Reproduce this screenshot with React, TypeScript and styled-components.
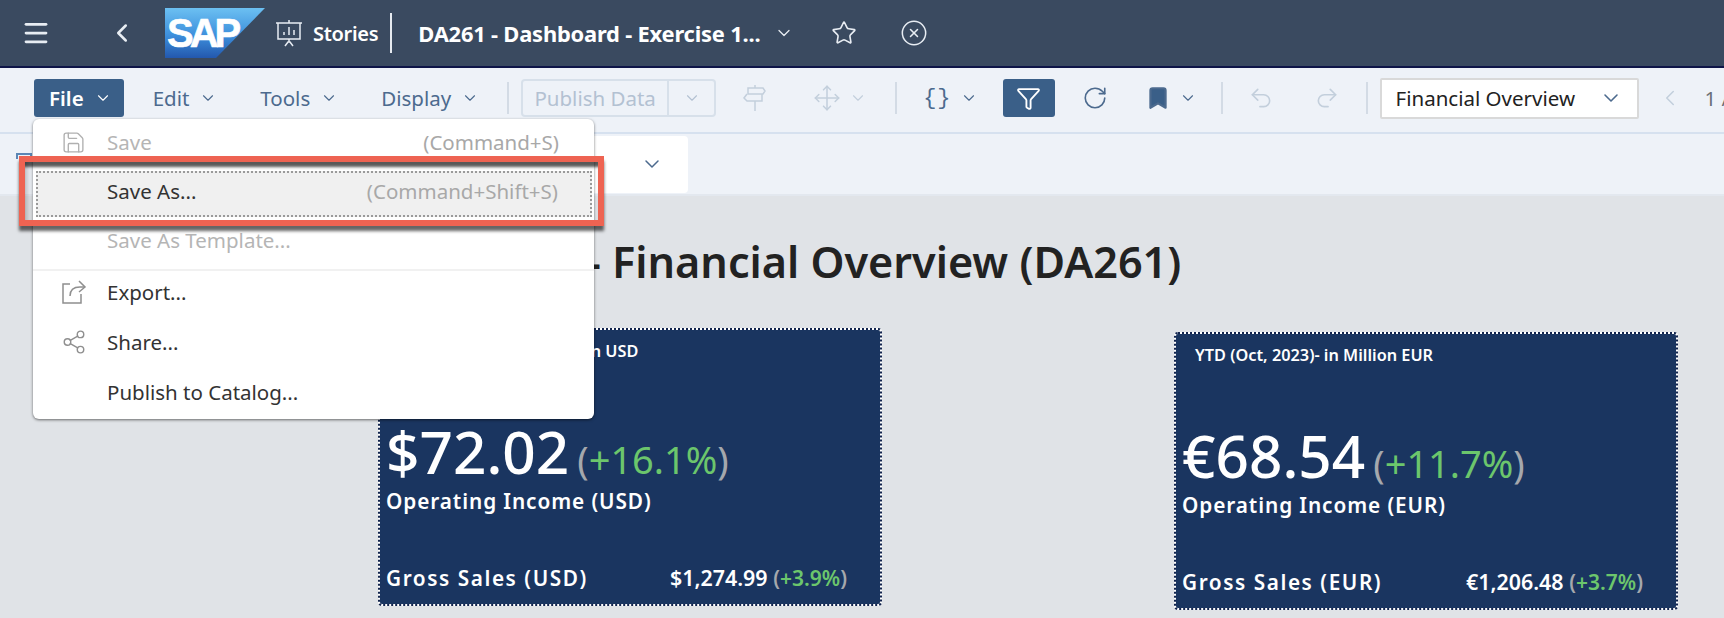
import styled, { createGlobalStyle } from "styled-components";
import {
  Menu,
  ChevronLeft,
  ChevronDown,
  Star,
  CircleX,
  Save,
  Share2,
  Funnel,
  RotateCw,
  Bookmark,
  Undo2,
  Redo2,
  Move,
} from "lucide-react";

const GlobalStyle = createGlobalStyle`
  html, body {
    margin: 0;
    padding: 0;
    background: #e0e3e7;
    font-family: "Noto Sans", "Liberation Sans", sans-serif;
  }
`;

const Page = styled.div`
  position: relative;
  width: 1724px;
  height: 618px;
  overflow: hidden;
  background: #e0e3e7;
`;

const Shell = styled.header`
  display: flex;
  align-items: center;
  box-sizing: border-box;
  height: 68px;
  padding-left: 21px;
  background: #3a4a60;
  border-bottom: 2px solid #0e1548;
  color: #fff;
`;

const ShellIcon = styled.span<{ $ml?: number }>`
  display: flex;
  margin-left: ${(p) => p.$ml ?? 0}px;
  color: #e8edf3;
`;

const Logo = styled.svg`
  display: block;
  margin-left: 28px;
`;

const Stories = styled.span`
  margin-left: 10px;
  font-size: 20px;
  font-weight: 600;
  letter-spacing: -0.3px;
`;

const ShellDivider = styled.span`
  width: 2px;
  height: 40px;
  margin: 0 26px 0 12px;
  background: #e6eaf0;
`;

const StoryTitle = styled.span`
  font-size: 21.9px;
  font-weight: 700;
  letter-spacing: -0.2px;
  white-space: nowrap;
`;

const Toolbar = styled.div`
  display: flex;
  align-items: center;
  box-sizing: border-box;
  height: 66px;
  padding: 0 0 4px 34px;
  background: #eef2f8;
  border-bottom: 2px solid #d6e1ef;
  white-space: nowrap;
  overflow: hidden;
`;

const MenuButton = styled.button<{ $active?: boolean; $mr?: number }>`
  display: flex;
  align-items: center;
  gap: 10px;
  box-sizing: border-box;
  height: 38px;
  padding: 0 ${(p) => (p.$active ? 12 : 14)}px 0 15px;
  margin-right: ${(p) => p.$mr ?? 14}px;
  border: 0;
  border-radius: 3px;
  font: inherit;
  font-size: 20.5px;
  font-weight: ${(p) => (p.$active ? 600 : 400)};
  color: ${(p) => (p.$active ? "#fff" : "#4c6a8e")};
  background: ${(p) => (p.$active ? "#3a5f88" : "transparent")};
`;

const ToolDivider = styled.span<{ $ml: number; $mr: number }>`
  flex: none;
  width: 2px;
  height: 32px;
  margin: 0 ${(p) => p.$mr}px 0 ${(p) => p.$ml}px;
  background: #d3dbe5;
`;

const PublishGroup = styled.div`
  display: flex;
  flex: none;
  align-items: stretch;
  box-sizing: border-box;
  width: 195px;
  height: 38px;
  border: 2px solid #d7e0ea;
  border-radius: 4px;
  color: #b3c1d2;
  font-size: 20.5px;
`;

const PublishLabel = styled.span`
  display: flex;
  align-items: center;
  justify-content: center;
  width: 144px;
  border-right: 2px solid #d7e0ea;
`;

const PublishCaret = styled.span`
  display: flex;
  flex: 1;
  align-items: center;
  justify-content: center;
`;

const ToolIcon = styled.span<{ $ml: number; $color?: string }>`
  display: flex;
  flex: none;
  align-items: center;
  gap: 8px;
  margin-left: ${(p) => p.$ml}px;
  color: ${(p) => p.$color ?? "#4c6a8e"};
`;

const Braces = styled.span`
  font-size: 22px;
  letter-spacing: 1px;
  font-family: "Liberation Mono", monospace;
`;

const FilterToggle = styled.span`
  display: flex;
  flex: none;
  align-items: center;
  justify-content: center;
  width: 52px;
  height: 38px;
  margin-left: 25px;
  border-radius: 3px;
  background: #3a5f88;
  color: #fff;
`;

const PageSelect = styled.div`
  display: flex;
  flex: none;
  align-items: center;
  justify-content: space-between;
  box-sizing: border-box;
  width: 259px;
  height: 41px;
  padding: 0 14px;
  background: #fff;
  border: 2px solid #d9d9d9;
  border-radius: 2px;
  color: #222;
  font-size: 20.5px;
`;

const PageNumber = styled.span`
  flex: none;
  margin-left: 22px;
  color: #6a6f76;
  font-size: 20.5px;
`;

const FilterBar = styled.div`
  display: flex;
  align-items: center;
  box-sizing: border-box;
  height: 62px;
  background: #eef2f8;
  border-bottom: 2px solid #e3e8ef;
`;

const FilterGlyph = styled.span`
  align-self: flex-start;
  box-sizing: border-box;
  width: 16px;
  height: 6px;
  margin: 19px 0 0 16px;
  border: 2px solid #5b86b5;
  border-bottom: 0;
`;

const FilterPill = styled.div`
  display: flex;
  align-items: center;
  justify-content: flex-end;
  box-sizing: border-box;
  width: 400px;
  height: 57px;
  margin-left: 256px;
  padding-right: 24px;
  background: #fff;
  border-radius: 4px;
  color: #4c6a8e;
`;

const Canvas = styled.main`
  position: relative;
  display: flex;
  flex-direction: column;
`;

const Heading = styled.h1`
  margin: 38px 0 0 587px;
  font-size: 43.2px;
  line-height: 56px;
  font-weight: 600;
  color: #222;
  white-space: nowrap;
`;

const CardRow = styled.div`
  display: flex;
  gap: 292px;
  margin: 38px 0 0 378px;
`;

const Card = styled.section<{ $mt?: number }>`
  display: flex;
  flex-direction: column;
  box-sizing: border-box;
  width: 504px;
  height: 278px;
  margin-top: ${(p) => p.$mt ?? 0}px;
  padding: 10px 33px 12px 6px;
  border: 2px dotted #12244e;
  background: linear-gradient(#1a3560, #1a3560) padding-box,
    linear-gradient(#fff, #fff) border-box;
  border-radius: 4px;
  color: #fff;
`;

const CardTitle = styled.div`
  padding-left: 13px;
  font-size: 16.3px;
  line-height: 22px;
  font-weight: 600;
`;

const BigRow = styled.div`
  display: flex;
  align-items: baseline;
  gap: 8px;
  margin-top: 60px;
  line-height: 59px;
`;

const BigValue = styled.span`
  font-size: 58.5px;
  font-weight: 500;
`;

const Delta = styled.span<{ $size: number }>`
  font-size: ${(p) => p.$size}px;
  color: #a5a8ad;
`;

const Green = styled.span`
  color: #6cc66c;
`;

const CardLabel = styled.div`
  font-size: 20.8px;
  line-height: 24px;
  font-weight: 600;
  letter-spacing: 0.9px;
`;

const FootLabel = styled(CardLabel)`
  letter-spacing: 1.55px;
`;

const CardFoot = styled.div`
  display: flex;
  align-items: center;
  justify-content: space-between;
  margin-top: auto;
`;

const FootValue = styled.span`
  font-size: 21.4px;
  font-weight: 600;
`;

const FileMenu = styled.div`
  position: absolute;
  top: 119px;
  left: 33px;
  box-sizing: border-box;
  width: 561px;
  height: 300px;
  background: #fff;
  border-radius: 6px;
  box-shadow: 0 1px 3px rgba(0, 0, 0, 0.55);
`;

const MenuItem = styled.div<{ $h: number; $off?: boolean }>`
  display: flex;
  align-items: center;
  box-sizing: border-box;
  height: ${(p) => p.$h}px;
  padding: 0 35px 2px 74px;
  font-size: 20.5px;
  color: ${(p) => (p.$off ? "#b5b5b5" : "#333")};
`;

const FocusItem = styled(MenuItem)`
  margin: 4px 2px 0 3px;
  padding: 0 32px 6px 69px;
  background: #f0f0f0;
  border: 2px dotted #9a9a9a;
`;

const ItemIcon = styled.span`
  display: flex;
  width: 26px;
  margin-left: -46px;
  margin-right: 20px;
  color: #8f8f8f;
`;

const Shortcut = styled.span`
  margin-left: auto;
  color: #a8a8a8;
`;

const MenuSeparator = styled.div`
  height: 2px;
  margin: 4px 0 -3px;
  background: #f1f1f1;
`;

const Callout = styled.div`
  position: absolute;
  top: 156px;
  left: 19px;
  box-sizing: border-box;
  width: 585px;
  height: 70px;
  border: 6px solid #ee6352;
  box-shadow: 0 5px 3px rgba(0, 0, 0, 0.6), inset 0 7px 3px -2px rgba(0, 0, 0, 0.65),
    inset 9px 0 5px -6px rgba(0, 0, 0, 0.2);
`;

function SapLogo() {
  return (
    <Logo width="100" height="50" viewBox="0 0 100 50">
      <defs>
        <linearGradient id="sapBlue" x1="0" y1="0" x2="0" y2="1">
          <stop offset="0" stopColor="#6cc0f2" />
          <stop offset="0.55" stopColor="#3d8fdc" />
          <stop offset="1" stopColor="#2358ae" />
        </linearGradient>
      </defs>
      <polygon points="0,0 100,0 51,50 0,50" fill="url(#sapBlue)" />
      <text
        x="2"
        y="39"
        fontFamily="Liberation Sans"
        fontWeight="700"
        fontSize="40"
        letterSpacing="-4"
        fill="#fff"
        stroke="#fff"
        strokeWidth="0.6"
      >
        SAP
      </text>
    </Logo>
  );
}

// easel with a small bar chart, the stories icon in the shell
function StoriesIcon() {
  return (
    <svg width="28" height="28" viewBox="0 0 28 28" fill="none" stroke="currentColor" strokeWidth="1.5">
      <path d="M1 4h26M3 4v16h22V4" />
      <path d="M14 1v3M14 20v3M10 27l3-4h2l3 4" />
      <path d="M9 16v-3M14 16V8M19 16v-5" />
    </svg>
  );
}

function ExportIcon() {
  return (
    <svg width="26" height="26" viewBox="0 0 26 26" fill="none" stroke="currentColor" strokeWidth="1.5">
      <path d="M9 5H2v19h18v-9" />
      <path d="M9 17c0-6 4-9 10-9h4" />
      <path d="M18 2l6 6-6 5" />
    </svg>
  );
}

// two sign boards on a post, the "pin" tool in the toolbar
function SignsIcon() {
  return (
    <svg width="26" height="28" viewBox="0 0 26 28" fill="none" stroke="currentColor" strokeWidth="1.5">
      <path d="M13 1v3M13 17v10" />
      <path d="M6 4h15l2 3-2 3H6z" />
      <path d="M20 10v7H5l-3-3 3-4" />
    </svg>
  );
}

const chevron = <ChevronDown size={18} strokeWidth={1.5} />;

export default function App() {
  return (
    <Page>
      <GlobalStyle />
      <Shell>
        <ShellIcon>
          <Menu size={30} strokeWidth={2.2} />
        </ShellIcon>
        <ShellIcon $ml={56}>
          <ChevronLeft size={30} strokeWidth={2} />
        </ShellIcon>
        <SapLogo />
        <ShellIcon $ml={10}>
          <StoriesIcon />
        </ShellIcon>
        <Stories>Stories</Stories>
        <ShellDivider />
        <StoryTitle>DA261 - Dashboard - Exercise 1...</StoryTitle>
        <ShellIcon $ml={14}>
          <ChevronDown size={20} strokeWidth={1.5} />
        </ShellIcon>
        <ShellIcon $ml={37}>
          <Star size={26} strokeWidth={1.5} />
        </ShellIcon>
        <ShellIcon $ml={43}>
          <CircleX size={28} strokeWidth={1.3} />
        </ShellIcon>
      </Shell>

      <Toolbar>
        <MenuButton $active>File {chevron}</MenuButton>
        <MenuButton>Edit {chevron}</MenuButton>
        <MenuButton>Tools {chevron}</MenuButton>
        <MenuButton $mr={0}>Display {chevron}</MenuButton>
        <ToolDivider $ml={14} $mr={12} />
        <PublishGroup>
          <PublishLabel>Publish Data</PublishLabel>
          <PublishCaret>{chevron}</PublishCaret>
        </PublishGroup>
        <ToolIcon $ml={26} $color="#c3cfdc">
          <SignsIcon />
        </ToolIcon>
        <ToolIcon $ml={45} $color="#c3cfdc">
          <Move size={28} strokeWidth={1.3} />
          {chevron}
        </ToolIcon>
        <ToolDivider $ml={28} $mr={0} />
        <ToolIcon $ml={26}>
          <Braces>{"{}"}</Braces>
          {chevron}
        </ToolIcon>
        <FilterToggle>
          <Funnel size={25} strokeWidth={1.8} />
        </FilterToggle>
        <ToolIcon $ml={27}>
          <RotateCw size={26} strokeWidth={1.5} />
        </ToolIcon>
        <ToolIcon $ml={37}>
          <Bookmark size={26} strokeWidth={2} fill="#3a5f88" />
          {chevron}
        </ToolIcon>
        <ToolDivider $ml={24} $mr={0} />
        <ToolIcon $ml={25} $color="#c3cfdc">
          <Undo2 size={26} strokeWidth={1.5} />
        </ToolIcon>
        <ToolIcon $ml={40} $color="#c3cfdc">
          <Redo2 size={26} strokeWidth={1.5} />
        </ToolIcon>
        <ToolDivider $ml={26} $mr={12} />
        <PageSelect>
          Financial Overview
          <ChevronDown size={24} strokeWidth={1.6} color="#4c6a8e" />
        </PageSelect>
        <ToolIcon $ml={18} $color="#c3cfdc">
          <ChevronLeft size={26} strokeWidth={1.4} />
        </ToolIcon>
        <PageNumber>1 /</PageNumber>
      </Toolbar>

      <FilterBar>
        <FilterGlyph />
        <FilterPill>
          <ChevronDown size={24} strokeWidth={1.5} />
        </FilterPill>
      </FilterBar>

      <Canvas>
        <Heading>- Financial Overview (DA261)</Heading>
        <CardRow>
          <Card>
            <CardTitle>YTD (Oct, 2023)- in Million USD</CardTitle>
            <BigRow>
              <BigValue>$72.02</BigValue>
              <Delta $size={38}>
                (<Green>+16.1%</Green>)
              </Delta>
            </BigRow>
            <CardLabel>Operating Income (USD)</CardLabel>
            <CardFoot>
              <FootLabel>Gross Sales (USD)</FootLabel>
              <FootValue>
                $1,274.99{" "}
                <Delta $size={21}>
                  (<Green>+3.9%</Green>)
                </Delta>
              </FootValue>
            </CardFoot>
          </Card>
          <Card $mt={4}>
            <CardTitle>YTD (Oct, 2023)- in Million EUR</CardTitle>
            <BigRow>
              <BigValue>€68.54</BigValue>
              <Delta $size={38}>
                (<Green>+11.7%</Green>)
              </Delta>
            </BigRow>
            <CardLabel>Operating Income (EUR)</CardLabel>
            <CardFoot>
              <FootLabel>Gross Sales (EUR)</FootLabel>
              <FootValue>
                €1,206.48{" "}
                <Delta $size={21}>
                  (<Green>+3.7%</Green>)
                </Delta>
              </FootValue>
            </CardFoot>
          </Card>
        </CardRow>
      </Canvas>

      <FileMenu>
        <MenuItem $h={48} $off>
          <ItemIcon>
            <Save size={25} strokeWidth={1.3} color="#b0b0b0" />
          </ItemIcon>
          Save
          <Shortcut>(Command+S)</Shortcut>
        </MenuItem>
        <FocusItem $h={46}>
          Save As...
          <Shortcut>(Command+Shift+S)</Shortcut>
        </FocusItem>
        <MenuItem $h={48} $off>
          Save As Template...
        </MenuItem>
        <MenuSeparator />
        <MenuItem $h={50}>
          <ItemIcon>
            <ExportIcon />
          </ItemIcon>
          Export...
        </MenuItem>
        <MenuItem $h={50}>
          <ItemIcon>
            <Share2 size={26} strokeWidth={1.3} />
          </ItemIcon>
          Share...
        </MenuItem>
        <MenuItem $h={50}>Publish to Catalog...</MenuItem>
      </FileMenu>

      <Callout />
    </Page>
  );
}
